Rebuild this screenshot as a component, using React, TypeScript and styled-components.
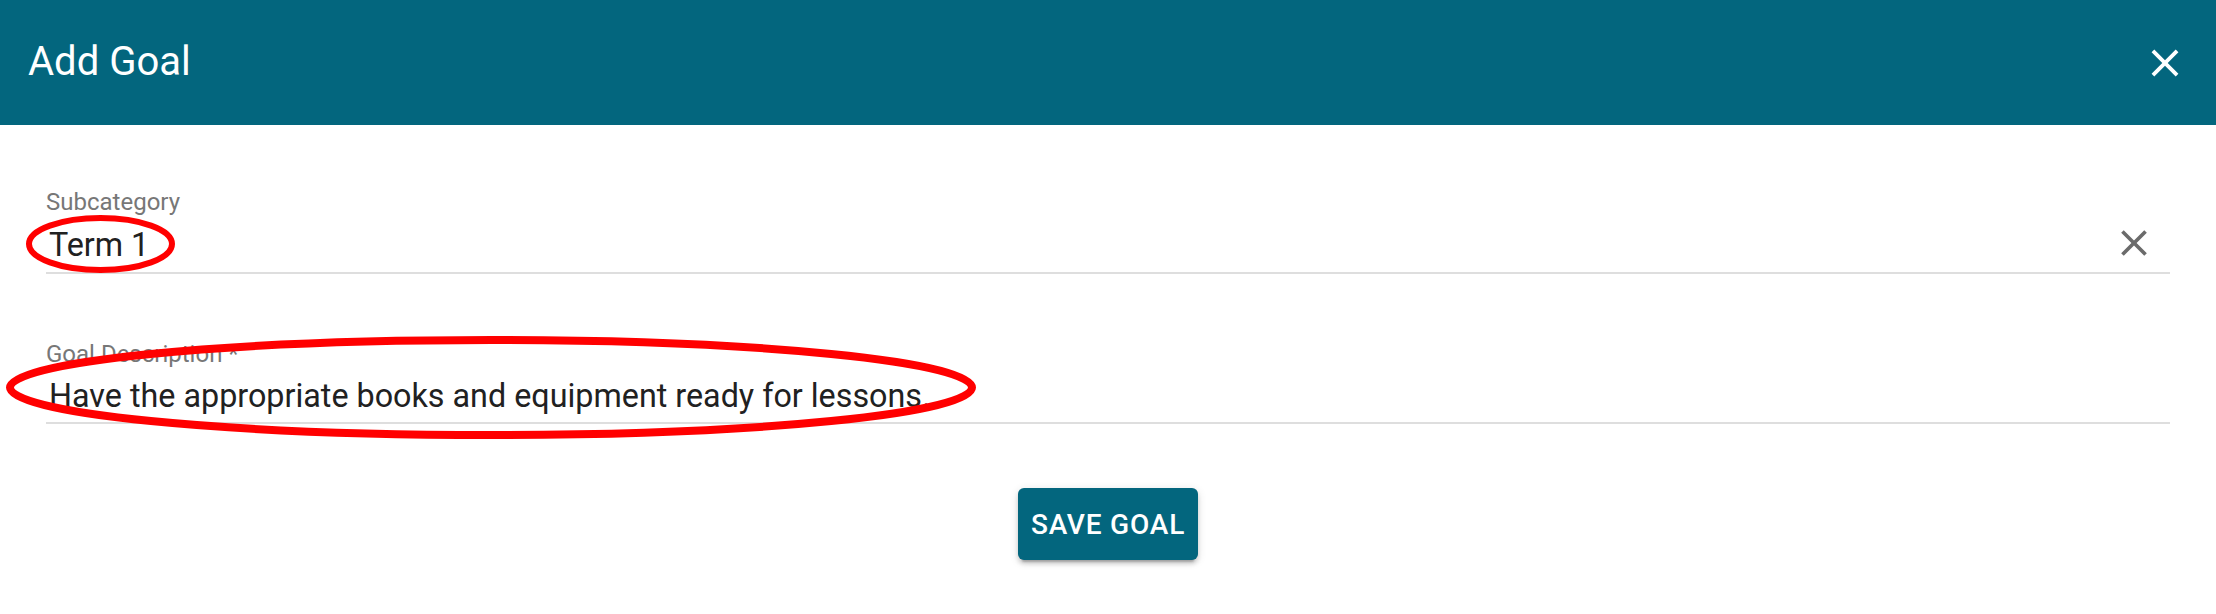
import styled, { createGlobalStyle } from "styled-components";

const GlobalStyle = createGlobalStyle`
  html, body {
    margin: 0;
    padding: 0;
    background: #ffffff;
  }
  body {
    font-family: Roboto, "Liberation Sans", Arial, sans-serif;
  }
`;

const Page = styled.div`
  position: relative;
  width: 2216px;
  height: 614px;
  background: #ffffff;
  overflow: hidden;
`;

const Header = styled.div`
  height: 125px;
  background: #03667e;
  display: flex;
  align-items: center;
  justify-content: space-between;
  padding: 0 28px;
  box-sizing: border-box;
`;

const Title = styled.h2`
  margin: 0 0 2px;
  font-size: 40px;
  font-weight: 400;
  color: #ffffff;
  line-height: 1;
`;

const IconButton = styled.button<{ $size: number; $color: string }>`
  width: ${(p) => p.$size}px;
  height: ${(p) => p.$size}px;
  padding: 0;
  border: none;
  background: transparent;
  color: ${(p) => p.$color};
  display: flex;
  align-items: center;
  justify-content: center;
  cursor: pointer;
  flex-shrink: 0;
`;

const Content = styled.div`
  padding: 63px 46px 0;
  display: flex;
  flex-direction: column;
  gap: 66px;
`;

const Field = styled.div`
  display: flex;
  flex-direction: column;
`;

const Label = styled.label`
  font-size: 24px;
  line-height: 28px;
  color: #777777;
  white-space: nowrap;
`;

const InputRow = styled.div`
  display: flex;
  align-items: center;
  margin-top: 5px;
  padding-bottom: 3px;
  border-bottom: 2px solid #dedede;
`;

const Value = styled.div`
  flex: 1;
  font-size: 32.3px;
  line-height: 46px;
  color: #212121;
  padding-left: 3px;
  white-space: nowrap;
`;

const ClearSlot = styled.div`
  margin: 0 14px 4px 0;
`;

const Actions = styled.div`
  display: flex;
  justify-content: center;
  margin-top: 64px;
`;

const SaveButton = styled.button`
  height: 72px;
  padding: 0 13px;
  border: none;
  border-radius: 6px;
  background: #03667e;
  color: #ffffff;
  font-family: Roboto, "Liberation Sans", Arial, sans-serif;
  font-size: 28px;
  font-weight: 500;
  letter-spacing: 0.8px;
  text-transform: uppercase;
  box-shadow: 0 6px 2px -4px rgba(0, 0, 0, 0.2), 0 4px 4px 0 rgba(0, 0, 0, 0.14),
    0 2px 10px 0 rgba(0, 0, 0, 0.12);
  cursor: pointer;
`;

const Annotations = styled.svg`
  position: absolute;
  left: 0;
  top: 0;
  pointer-events: none;
`;

const CloseIcon = ({ size }: { size: number }) => (
  <svg width={size} height={size} viewBox="0 0 24 24" fill="currentColor">
    <path d="M19 6.41 17.59 5 12 10.59 6.41 5 5 6.41 10.59 12 5 17.59 6.41 19 12 13.41 17.59 19 19 17.59 13.41 12z" />
  </svg>
);

export default function App() {
  return (
    <>
      <GlobalStyle />
      <Page>
        <Header>
          <Title>Add Goal</Title>
          <IconButton $size={46} $color="#ffffff" aria-label="close">
            <CloseIcon size={46} />
          </IconButton>
        </Header>
        <Content>
          <Field>
            <Label>Subcategory</Label>
            <InputRow>
              <Value>Term 1</Value>
              <ClearSlot>
                <IconButton $size={44} $color="#6b6b6b" aria-label="clear">
                  <CloseIcon size={44} />
                </IconButton>
              </ClearSlot>
            </InputRow>
          </Field>
          <Field>
            <Label>Goal Description *</Label>
            <InputRow>
              <Value>Have the appropriate books and equipment ready for lessons.</Value>
            </InputRow>
          </Field>
        </Content>
        <Actions>
          <SaveButton>Save Goal</SaveButton>
        </Actions>
        <Annotations width={2216} height={614} viewBox="0 0 2216 614">
          <ellipse cx={100.5} cy={244} rx={71.5} ry={26} fill="none" stroke="#ff0000" strokeWidth={6} />
          <ellipse cx={491} cy={387.5} rx={481} ry={47.5} fill="none" stroke="#ff0000" strokeWidth={8} />
        </Annotations>
      </Page>
    </>
  );
}
